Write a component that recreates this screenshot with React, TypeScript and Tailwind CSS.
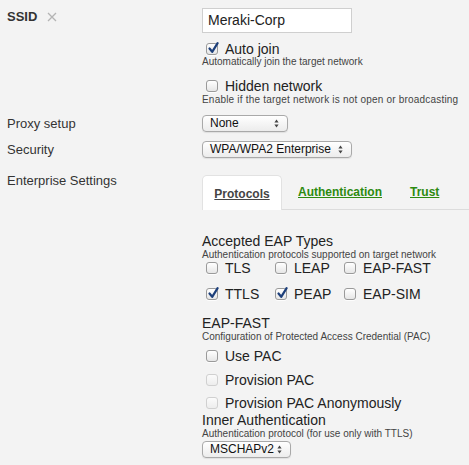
import React from "react";

const font = { fontFamily: '"Liberation Sans", Arial, sans-serif' };

function Box({ checked = false, disabled = false }: { checked?: boolean; disabled?: boolean }) {
  return (
    <span
      className={
        "relative inline-block w-[12px] h-[12px] shrink-0 rounded-[3px] border bg-gradient-to-b " +
        (disabled
          ? "border-[#d0d0d0] from-[#fbfbfb] to-[#ededed]"
          : "border-[#9a9a9a] from-white to-[#e6e6e6] shadow-[0_1px_0_rgba(255,255,255,0.8)]")
      }
    >
      {checked && (
        <svg className="absolute left-[1px] top-[-2px]" width="11" height="12" viewBox="0 0 11 12">
          <path d="M1.5 6.5 L4.2 9.8 L9.6 1.2" fill="none" stroke="#1d3f7a" strokeWidth="2.2" strokeLinecap="round" strokeLinejoin="round" />
        </svg>
      )}
    </span>
  );
}

function Check({ label, checked, disabled, className = "" }: { label: string; checked?: boolean; disabled?: boolean; className?: string }) {
  return (
    <div className={"flex items-center h-[16px] " + className}>
      <span className="ml-[4px] mr-[7px] flex">
        <Box checked={checked} disabled={disabled} />
      </span>
      <span className="text-[14px] leading-[16px] text-[#222]">{label}</span>
    </div>
  );
}

function Select({ value, width }: { value: string; width: string }) {
  return (
    <div
      className={
        "flex items-center justify-between h-[17px] rounded-[4px] border border-[#a9a9a9] bg-gradient-to-b from-white to-[#ececec] pl-[7px] pr-[8px] shadow-[0_1px_1px_rgba(0,0,0,0.08)] " +
        width
      }
    >
      <span className="text-[12px] leading-[15px] text-[#111]">{value}</span>
      <svg width="5" height="9" viewBox="0 0 5 9">
        <path d="M2.5 0.5 L4.6 3.4 L0.4 3.4 Z" fill="#444" />
        <path d="M2.5 8.5 L4.6 5.6 L0.4 5.6 Z" fill="#444" />
      </svg>
    </div>
  );
}

function Sub({ children, className = "" }: { children: React.ReactNode; className?: string }) {
  return <div className={"text-[10px] leading-[12px] text-[#444] " + className}>{children}</div>;
}

function Label({ children, className = "" }: { children: React.ReactNode; className?: string }) {
  return <div className={"w-[202px] shrink-0 pl-[7px] text-[13px] leading-[16px] text-[#333] " + className}>{children}</div>;
}

export default function App() {
  return (
    <div className="w-[469px] h-[465px] bg-[#f3f3f3] overflow-hidden pt-[8px]" style={font}>
      {/* SSID */}
      <div className="flex">
        <Label className="pt-[1px]">
          <span className="flex items-center gap-[10px] h-[16px]">
            <span className="font-bold text-[13px] text-[#333]">SSID</span>
            <svg width="10" height="10" viewBox="0 0 10 10">
              <path d="M1 1 L9 9 M9 1 L1 9" stroke="#b4b4b4" strokeWidth="1.3" />
            </svg>
          </span>
        </Label>
        <div className="flex flex-col">
          <div className="w-[150px] h-[25px] border border-[#cfcfcf] bg-white pl-[5px] flex items-center text-[14px] text-[#222]">
            Meraki-Corp
          </div>
          <Check label="Auto join" checked className="mt-[8px]" />
          <Sub className="mt-[-1px]">Automatically join the target network</Sub>
          <Check label="Hidden network" className="mt-[10px]" />
          <Sub className="tracking-[0.2px]">Enable if the target network is not open or broadcasting</Sub>
        </div>
      </div>

      {/* Proxy */}
      <div className="flex items-center mt-[9px]">
        <Label>Proxy setup</Label>
        <Select value="None" width="w-[86px]" />
      </div>

      {/* Security */}
      <div className="flex items-center mt-[9px]">
        <Label>Security</Label>
        <Select value="WPA/WPA2 Enterprise" width="w-[150px]" />
      </div>

      {/* Enterprise */}
      <div className="flex mt-[17px]">
        <Label className="mt-[-2px]">Enterprise Settings</Label>
        <div className="flex-1 flex flex-col">
          <div className="flex items-end border-b border-[#dcdcdc] h-[35px]">
            <div className="w-[80px] h-[35px] mb-[-1px] bg-white border border-b-0 border-[#e2e2e2] rounded-t-[5px] flex items-center justify-center">
              <span className="text-[12px] font-bold underline text-[#444] mt-[1px]">Protocols</span>
            </div>
            <div className="h-[35px] flex items-center ml-[16px]">
              <span className="text-[12px] font-bold underline text-[#2d8a10] mt-[1px]">Authentication</span>
            </div>
            <div className="h-[35px] flex items-center ml-[28px]">
              <span className="text-[12px] font-bold underline text-[#2d8a10] mt-[1px]">Trust</span>
            </div>
          </div>

          <div className="mt-[23px] text-[14px] leading-[16px] text-[#222]">Accepted EAP Types</div>
          <Sub>Authentication protocols supported on target network</Sub>
          <div className="grid grid-cols-[69px_69px_100px] mt-[-1px]">
            <Check label="TLS" />
            <Check label="LEAP" />
            <Check label="EAP-FAST" />
          </div>
          <div className="grid grid-cols-[69px_69px_100px] mt-[10px]">
            <Check label="TTLS" checked />
            <Check label="PEAP" checked />
            <Check label="EAP-SIM" />
          </div>

          <div className="mt-[13px] text-[14px] leading-[16px] text-[#222]">EAP-FAST</div>
          <Sub>Configuration of Protected Access Credential (PAC)</Sub>
          <Check label="Use PAC" className="mt-[5px]" />
          <Check label="Provision PAC" disabled className="mt-[8px]" />
          <Check label="Provision PAC Anonymously" disabled className="mt-[7px]" />
          <div className="mt-[1px] text-[14px] leading-[16px] text-[#222]">Inner Authentication</div>
          <Sub>Authentication protocol (for use only with TTLS)</Sub>
          <div className="mt-[1px]">
            <Select value="MSCHAPv2" width="w-[89px]" />
          </div>
        </div>
      </div>
    </div>
  );
}
